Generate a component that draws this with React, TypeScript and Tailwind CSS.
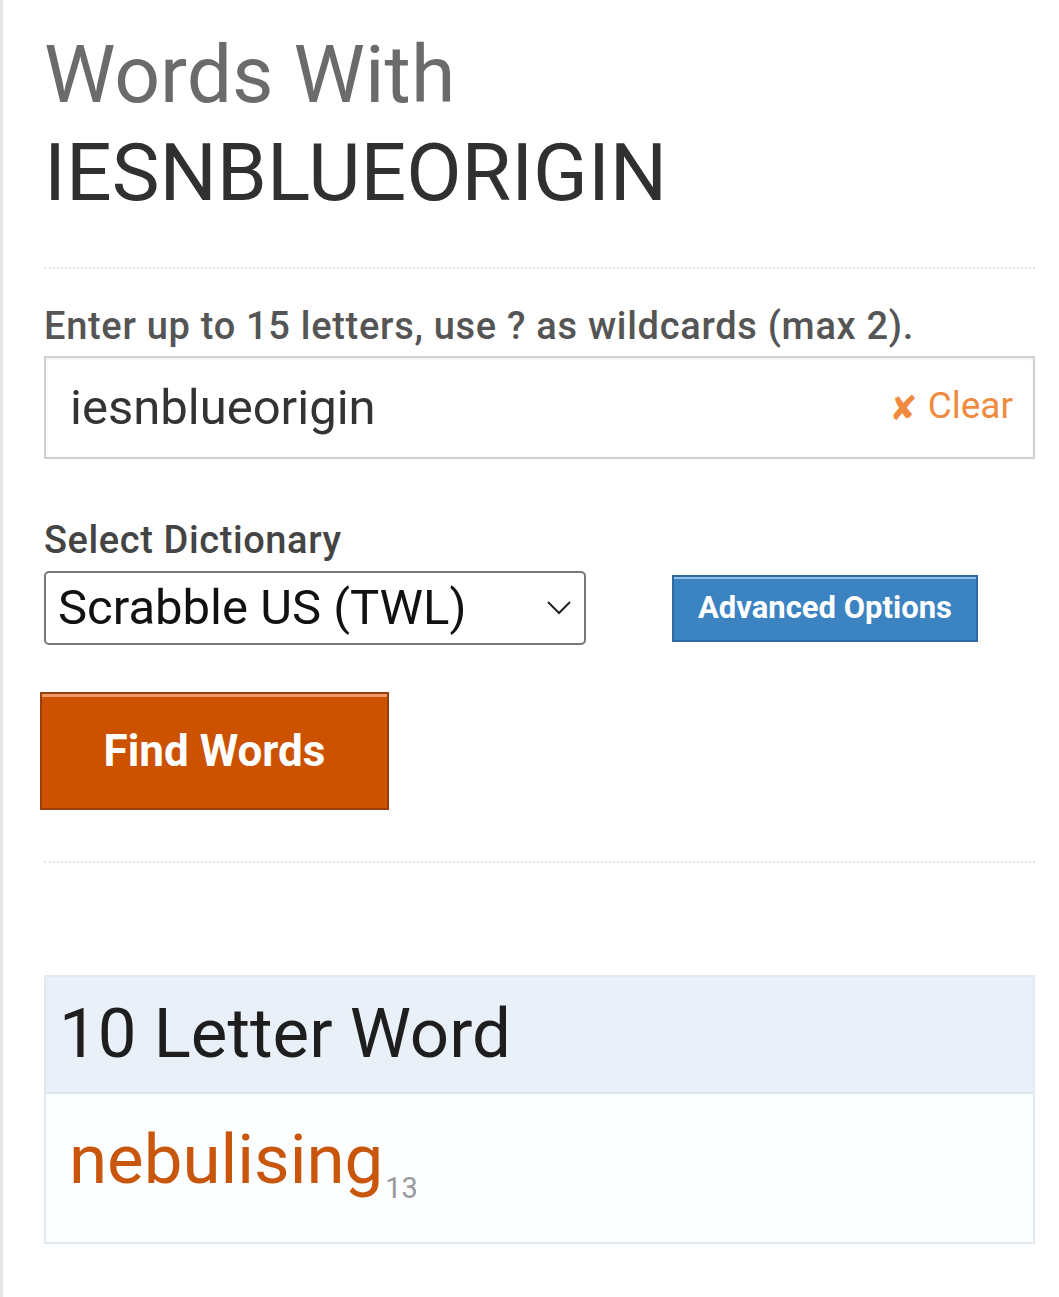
export default function App() {
  return (
    <div
      className="min-h-[1297px] w-[1059px] bg-white border-l-[3px] border-[#e6e6e6] pl-[41px] pr-[24px] pt-[26px]"
      style={{ fontFamily: 'Roboto, "Liberation Sans", sans-serif' }}
    >
      <h1 className="text-[80.5px] leading-[98px] font-normal">
        <span className="block text-[#6b6b6b]">Words With</span>
        <span className="block text-[#303030]">IESNBLUEORIGIN</span>
      </h1>

      <div className="mt-[45px] border-t-2 border-dotted border-[#e2e2e2]" />

      <form className="mt-[36px]" onSubmit={(e) => e.preventDefault()}>
        <label className="block text-[38px] leading-[43px] tracking-[0.7px] font-medium text-[#555]">
          Enter up to 15 letters, use ? as wildcards (max 2).
        </label>
        <div className="mt-2 h-[103px] flex items-center border-2 border-[#d0d0d0] shadow-[inset_0_1px_3px_rgba(0,0,0,0.08)] pl-[24px] pr-[20px]">
          <span className="flex-1 text-[49px] text-[#333]">iesnblueorigin</span>
          <span className="flex items-center gap-[10px] text-[37px] text-[#ef8a3e] mt-[-4px]">
            <span className="text-[34px] font-bold mt-[6px]" style={{ fontFamily: '"DejaVu Sans", sans-serif' }}>✘</span>
            Clear
          </span>
        </div>

        <label className="block mt-[60px] text-[38px] leading-[43px] tracking-[0.6px] font-medium text-[#444]">
          Select Dictionary
        </label>
        <div className="mt-[9px] flex items-center">
          <div className="w-[542px] h-[74px] border-2 border-[#777] rounded-[5px] flex items-center pl-[12px] pr-[12px]">
            <span className="flex-1 text-[49px] text-[#111]">Scrabble US (TWL)</span>
            <svg width="26" height="16" viewBox="0 0 26 16" fill="none" stroke="#222" strokeWidth="2">
              <path d="M2 2 L13 13 L24 2" />
            </svg>
          </div>
          <button
            type="button"
            className="ml-[86px] w-[306px] h-[67px] bg-[#3c84c1] border-2 border-[#2e6aa0] shadow-[inset_0_2px_0_#8ebfe8] text-white text-[31px] font-bold"
          >
            Advanced Options
          </button>
        </div>

        <button
          type="submit"
          className="ml-[-4px] mt-[47px] w-[349px] h-[118px] bg-[#cc5200] border-2 border-[#9a3f0b] shadow-[inset_0_3px_0_#ee9a68] text-white text-[44px] font-bold"
        >
          Find Words
        </button>
      </form>

      <div className="mt-[51px] border-t-2 border-dotted border-[#e2e2e2]" />

      <div className="mt-[112px] border-2 border-[#e0e8f0]">
        <div className="h-[117px] bg-[#e9f0f7] border-b-2 border-[#dde6ef] flex items-center pl-[13px]">
          <h2 className="text-[69px] text-[#1e1e1e] font-normal mt-[-2px]">10 Letter Word</h2>
        </div>
        <div className="h-[148px] bg-[#fdfeff] pl-[23px] pt-[14px]">
          <span className="text-[69px] text-[#c8570d]">nebulising</span>
          <sub className="ml-[2px] text-[29px] text-[#999] bottom-[-0.5em]">13</sub>
        </div>
      </div>
    </div>
  );
}
